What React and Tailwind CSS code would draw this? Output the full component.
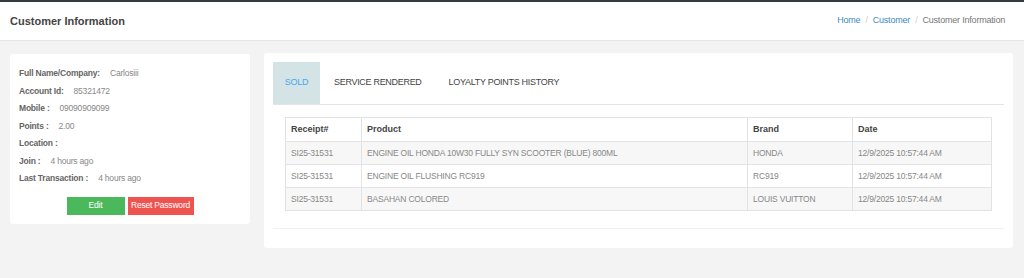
import React from "react";

const info = [
  ["Full Name/Company:", "Carlosiii"],
  ["Account Id:", "85321472"],
  ["Mobile :", "09090909099"],
  ["Points :", "2.00"],
  ["Location :", ""],
  ["Join :", "4 hours ago"],
  ["Last Transaction :", "4 hours ago"],
];

const rows = [
  ["SI25-31531", "ENGINE OIL HONDA 10W30 FULLY SYN SCOOTER (BLUE) 800ML", "HONDA", "12/9/2025 10:57:44 AM"],
  ["SI25-31531", "ENGINE OIL FLUSHING RC919", "RC919", "12/9/2025 10:57:44 AM"],
  ["SI25-31531", "BASAHAN COLORED", "LOUIS VUITTON", "12/9/2025 10:57:44 AM"],
];

export default function App() {
  return (
    <div className="min-h-[278px] bg-[#f3f3f3] font-['Liberation_Sans',Arial,sans-serif] text-[8.5px] tracking-[-0.2px]">
      {/* top strip + page header */}
      <div className="border-t-2 border-[#353b43] bg-white border-b border-b-[#e6e6e6] h-[41px] flex items-center justify-between pl-[10px] pr-[19px]">
        <h1 className="text-[11px] font-bold text-[#444] tracking-normal">Customer Information</h1>
        <div className="flex items-center gap-[5px] text-[9px]">
          <a className="text-[#3c8dbc]">Home</a>
          <span className="text-[#ccc]">/</span>
          <a className="text-[#3c8dbc]">Customer</a>
          <span className="text-[#ccc]">/</span>
          <span className="text-[#777]">Customer Information</span>
        </div>
      </div>

      <div className="flex items-start gap-[14px] pl-[10px] pr-[11px] pt-[12px]">
        {/* profile card */}
        <div className="mt-[1px] w-[240px] bg-white rounded-[3px] pl-[9px] pr-[9px] pt-[11px] pb-[9px]">
          <div className="flex flex-col">
            {info.map(([label, value]) => (
              <div key={label} className="h-[17.5px] flex items-center">
                <span className="font-bold text-[#666]">{label}</span>
                <span className="ml-[10px] text-[#888]">{value}</span>
              </div>
            ))}
          </div>
          <div className="flex justify-center gap-[3px] mt-[9px]">
            <button className="w-[58px] h-[18px] bg-[#4cb85c] text-white">Edit</button>
            <button className="w-[66px] h-[18px] bg-[#ef5350] text-white whitespace-nowrap">Reset Password</button>
          </div>
        </div>

        {/* transactions card */}
        <div className="flex-1 bg-white rounded-[3px] px-[9px] pt-[9px] pb-[19px]">
          <div className="flex border-b border-[#e4e4e4] h-[43px] text-[9px] tracking-[-0.3px]">
            <div className="w-[47px] bg-[#d4e3e5] flex items-center justify-center text-[#4aa8e8]">SOLD</div>
            <div className="pl-[14px] pr-[13px] flex items-center text-[#444]">SERVICE RENDERED</div>
            <div className="pl-[14px] flex items-center text-[#444]">LOYALTY POINTS HISTORY</div>
          </div>

          <div className="px-[12px] pt-[12px] pb-[17px] border-b border-[#f0f0f0]">
            <table className="w-full table-fixed border-collapse border border-[#e2e2e2]">
              <colgroup>
                <col className="w-[76px]" />
                <col className="w-[386px]" />
                <col className="w-[105px]" />
                <col />
              </colgroup>
              <thead>
                <tr className="h-[24px] bg-white">
                  {["Receipt#", "Product", "Brand", "Date"].map((h) => (
                    <th key={h} className="border border-[#e2e2e2] px-[5px] text-left font-bold text-[#444] text-[9px] tracking-normal">{h}</th>
                  ))}
                </tr>
              </thead>
              <tbody>
                {rows.map((r, i) => (
                  <tr key={i} className={i % 2 === 0 ? "h-[23px] bg-[#f7f7f7]" : "h-[23px] bg-white"}>
                    {r.map((c, j) => (
                      <td key={j} className="border border-[#e2e2e2] px-[5px] text-[#888] whitespace-nowrap">{c}</td>
                    ))}
                  </tr>
                ))}
              </tbody>
            </table>
          </div>
        </div>
      </div>
    </div>
  );
}
